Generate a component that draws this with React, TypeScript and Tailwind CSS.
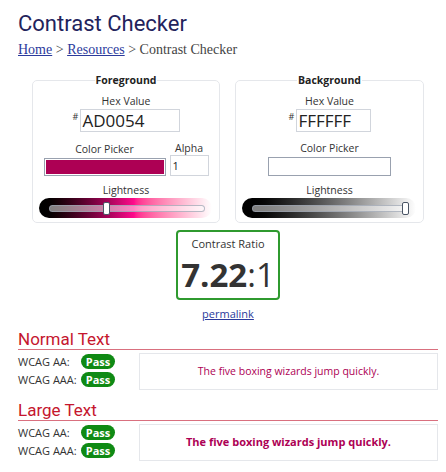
const sans = "font-['Open_Sans',sans-serif]";

type SliderProps = { gradient: string; thumb: number };

const Lightness = ({ gradient, thumb }: SliderProps) => (
  <div className={`relative h-[20px] rounded-full ${gradient}`}>
    <div className="absolute left-[10px] right-[7px] top-[7px] h-[7px] rounded-full border border-gray-400/70 bg-white/50" />
    <div
      className="absolute top-[4px] h-[13px] w-[7px] rounded-[2px] border border-gray-600 bg-white"
      style={{ left: thumb }}
    />
  </div>
);

type PanelProps = {
  title: string;
  hex: string;
  hexWidth: string;
  color: string;
  alpha?: boolean;
  gradient: string;
  thumb: number;
  width: string;
};

const Panel = ({ title, hex, hexWidth, color, alpha, gradient, thumb, width }: PanelProps) => (
  <fieldset className={`${width} min-w-0 shrink-0 rounded-[5px] border border-gray-200 px-[5px] pb-[4px]`}>
    <legend className="mx-auto px-[1px] text-[10.5px] leading-[14px] font-bold text-[#222]">{title}</legend>
    <div className="mt-[7px] text-center text-[10.5px] leading-[14px] text-[#333]">Hex Value</div>
    <div className="mt-[1px] flex justify-center">
      <span className="mt-[3px] w-[7px] text-[9px] leading-[10px] text-[#333]">#</span>
      <div className={`${hexWidth} h-[23px] border border-gray-300 pl-[2px] text-[17px] leading-[21px] text-[#222]`}>
        {hex}
      </div>
    </div>
    {alpha ? (
      <div className="mt-[9px] flex items-end justify-center gap-[4px]">
        <div className="flex flex-col items-center">
          <div className="text-[10.5px] leading-[14px] text-[#333]">Color Picker</div>
          <div className="mt-[2px] h-[18px] w-[122px] border border-gray-400 p-[1px]">
            <div className="h-full w-full" style={{ background: color }} />
          </div>
        </div>
        <div className="flex flex-col items-center">
          <div className="text-[10.5px] leading-[14px] text-[#333]">Alpha</div>
          <div className="mt-[0px] h-[21px] w-[39px] border border-gray-300 pl-[2px] text-[11px] leading-[19px] text-[#222]">
            1
          </div>
        </div>
      </div>
    ) : (
      <div className="mt-[9px] flex flex-col items-center">
        <div className="text-[10.5px] leading-[14px] text-[#333]">Color Picker</div>
        <div className="mt-[2px] h-[19px] w-[123px] border border-gray-400 p-[1px]">
          <div className="h-full w-full" style={{ background: color }} />
        </div>
      </div>
    )}
    <div className="mt-[7px] text-center text-[10.5px] leading-[14px] text-[#333]">Lightness</div>
    <div className="mt-[1px] pl-[1px] pr-[2px]">
      <Lightness gradient={gradient} thumb={thumb} />
    </div>
  </fieldset>
);

const Pass = () => (
  <span className="inline-flex h-[15px] w-[34px] items-center justify-center rounded-full bg-[#0f8a14] text-[11px] font-bold text-white">
    Pass
  </span>
);

const Section = ({ title, bold }: { title: string; bold?: boolean }) => (
  <div>
    <h2 className="border-b border-[#d9707f] font-['Roboto',sans-serif] text-[17px] leading-[20px] text-[#c5162e]">
      {title}
    </h2>
    <div className="flex">
      <div className="flex w-[121px] shrink-0 flex-col gap-[3px] pt-[4px] text-[11px] leading-[15px] whitespace-nowrap text-[#333]">
        <div className="flex items-center">
          <span className="w-[63px]">WCAG AA:</span>
          <Pass />
        </div>
        <div className="flex items-center">
          <span className="w-[63px]">WCAG AAA:</span>
          <Pass />
        </div>
      </div>
      <div
        className={`mt-[3px] flex h-[37px] flex-1 items-center justify-center border border-gray-200 text-[#AD0054] ${
          bold ? "text-[11px] font-bold" : "text-[10.5px]"
        }`}
      >
        The five boxing wizards jump quickly.
      </div>
    </div>
  </div>
);

export default function App() {
  return (
    <div className={`h-[472px] w-[446px] overflow-hidden bg-white pr-[8px] pl-[18px] ${sans}`}>
      <h1 className="pt-[10px] font-['Roboto',sans-serif] text-[22px] leading-[28px] text-[#23235c]">
        Contrast Checker
      </h1>
      <p className="mt-[4px] font-['Liberation_Serif',serif] text-[14px] leading-[16px] text-[#444]">
        <span className="text-[#2b3a9c] underline">Home</span> &gt;{" "}
        <span className="text-[#2b3a9c] underline">Resources</span> &gt; Contrast Checker
      </p>
      <div className="mt-[15px] flex justify-center gap-[15px]">
        <Panel
          title="Foreground"
          hex="AD0054"
          hexWidth="w-[100px]"
          color="#AD0054"
          alpha
          gradient="bg-linear-to-r from-black via-[#ff0a8c] via-55% to-white"
          thumb={64}
          width="w-[188px]"
        />
        <Panel
          title="Background"
          hex="FFFFFF"
          hexWidth="w-[75px]"
          color="#ffffff"
          gradient="bg-linear-to-r from-black to-white"
          thumb={160}
          width="w-[189px]"
        />
      </div>
      <div className="mt-[7px] flex flex-col items-center">
        <div className="flex h-[70px] w-[104px] flex-col items-center rounded-[4px] border-2 border-[#2f9a2f] pt-[5px]">
          <div className="text-[11px] leading-[14px] text-[#333]">Contrast Ratio</div>
          <div className="mt-[4px] text-[33px] leading-[40px] text-[#333]">
            <span className="font-bold">7.22</span>:1
          </div>
        </div>
        <a className="mt-[7px] text-[11px] leading-[14px] text-[#2b3a9c] underline">permalink</a>
      </div>
      <div className="mt-[8px]">
        <Section title="Normal Text" />
      </div>
      <div className="mt-[10px]">
        <Section title="Large Text" bold />
      </div>
    </div>
  );
}
